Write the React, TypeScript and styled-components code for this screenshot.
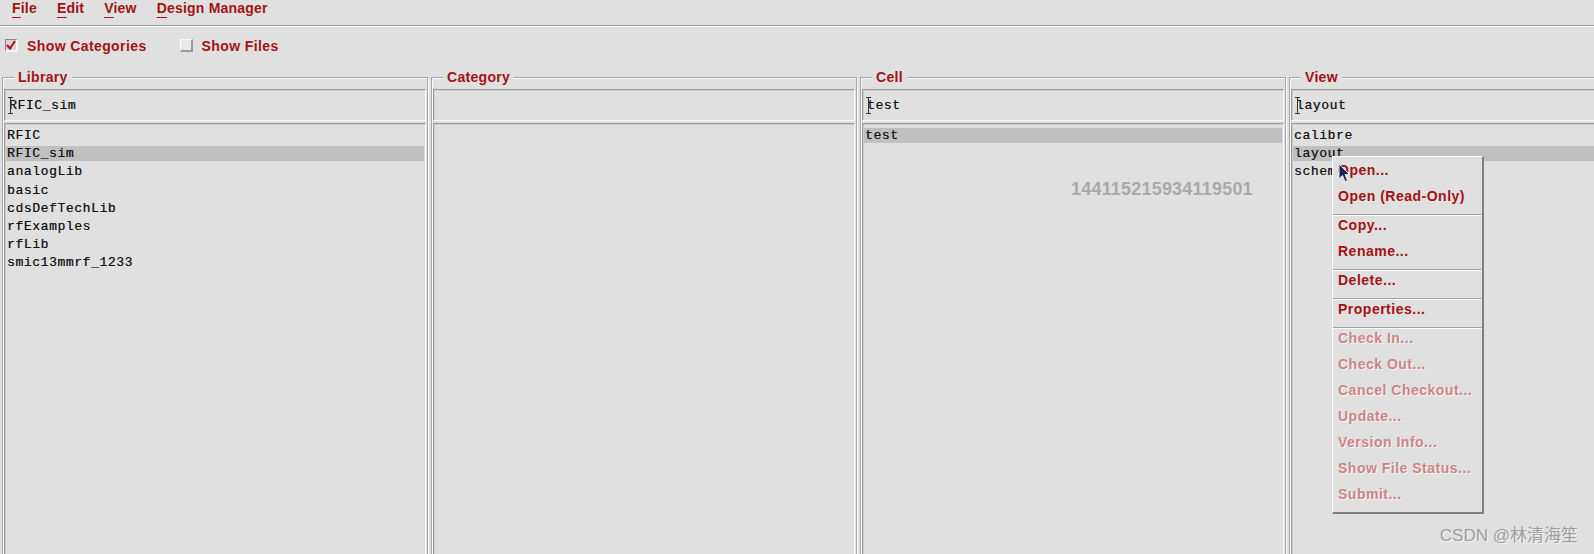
import React from "react";
import styled, { createGlobalStyle } from "styled-components";

const RED = "#a31313";
const SANS = `"Liberation Sans", Arial, sans-serif`;
const MONO = `"Liberation Mono", "Courier New", monospace`;

const GlobalStyle = createGlobalStyle`
  html, body { margin: 0; padding: 0; background: #e0e0e0; }
  body { width: 1594px; height: 554px; overflow: hidden; font-family: ${SANS}; }
`;

const Window = styled.div`
  position: relative;
  width: 1594px;
  height: 554px;
  overflow: hidden;
  background: #e0e0e0;
  display: flex;
  flex-direction: column;
`;

const MenuBar = styled.div`
  flex-shrink: 0;
  height: 25px;
  display: flex;
  align-items: flex-start;
  gap: 20px;
  padding-left: 12px;
  border-bottom: 1px solid #9c9c9c;
  box-shadow: 0 1px 0 #fff;
`;

const MenuItem = styled.span`
  font: bold 14px ${SANS};
  line-height: 16px;
  letter-spacing: 0.2px;
  color: ${RED};
  u {
    text-decoration: underline;
    text-underline-offset: 4px;
  }
`;

const OptionsRow = styled.div`
  flex-shrink: 0;
  height: 37px;
  margin-top: 1px;
  display: flex;
  align-items: center;
  padding-left: 5px;
  gap: 33px;
`;

const Option = styled.label`
  display: flex;
  align-items: center;
  gap: 9px;
  font: bold 14px ${SANS};
  letter-spacing: 0.4px;
  color: ${RED};
`;

const CheckBox = styled.span<{ $checked?: boolean }>`
  width: 13px;
  height: 13px;
  box-sizing: border-box;
  display: flex;
  align-items: center;
  justify-content: center;
  background: ${(p) => (p.$checked ? "#d6d6d6" : "#e9e9e9")};
  border-style: solid;
  border-width: 1px 2px 2px 1px;
  border-color: ${(p) =>
    p.$checked ? "#8a8a8a #f4f4f4 #f4f4f4 #8a8a8a" : "#fafafa #9a9a9a #9a9a9a #fafafa"};
`;

const Columns = styled.div`
  flex: 1;
  min-height: 0;
  display: grid;
  grid-template-columns: repeat(4, 426px);
  column-gap: 3px;
  padding-left: 2px;
  margin-top: 5px;
`;

const Panel = styled.fieldset`
  margin: 0;
  min-width: 0;
  height: 560px;
  padding: 4px 1px 0 1px;
  border: 1px solid #a8a8a8;
  box-shadow: inset 1px 1px 0 #fbfbfb, 1px 1px 0 #fbfbfb;
`;

const Legend = styled.legend`
  margin-left: 10px;
  padding: 0 4px;
  background: #e0e0e0;
  font: bold 14px ${SANS};
  line-height: 16px;
  letter-spacing: 0.3px;
  color: ${RED};
`;

const PanelBody = styled.div`
  display: flex;
  flex-direction: column;
  gap: 2px;
  height: 100%;
`;

const Field = styled.div`
  position: relative;
  height: 32px;
  box-sizing: border-box;
  display: flex;
  align-items: center;
  padding: 1px 0 0 4px;
  border: 1px solid;
  border-color: #9a9a9a #fbfbfb #fbfbfb #9a9a9a;
  box-shadow: inset 1px 1px 0 #cdcdcd;
  font: 13px ${MONO};
  letter-spacing: 0.6px;
  color: #111;
  text-shadow: 0.4px 0 0 rgba(0, 0, 0, 0.55);
`;

const IBeam = styled.svg`
  position: absolute;
  left: 3px;
  top: 7px;
`;

const ListBox = styled.div`
  flex: 1;
  box-sizing: border-box;
  padding-top: 4px;
  border: 1px solid;
  border-color: #9a9a9a #fbfbfb #fbfbfb #9a9a9a;
  box-shadow: inset 1px 1px 0 #cdcdcd;
`;

const Row = styled.div<{ $selected?: boolean }>`
  height: 15px;
  line-height: 15px;
  margin: 0 1px 3.2px 1px;
  padding-left: 1px;
  background: ${(p) => (p.$selected ? "#c0c0c0" : "transparent")};
  font: 13px ${MONO};
  letter-spacing: 0.6px;
  color: #111;
  text-shadow: 0.4px 0 0 rgba(0, 0, 0, 0.55);
  white-space: nowrap;
`;

const Popup = styled.div`
  position: absolute;
  left: 1332px;
  top: 156px;
  width: 152px;
  box-sizing: border-box;
  padding-top: 5px;
  background: #e0e0e0;
  border-style: solid;
  border-width: 1px 2px 2px 1px;
  border-color: #fbfbfb #7e7e7e #7e7e7e #fbfbfb;
`;

const PopItem = styled.div<{ $disabled?: boolean }>`
  height: 26px;
  line-height: 26px;
  padding-left: 5px;
  font: bold 14px ${SANS};
  letter-spacing: 0.5px;
  white-space: nowrap;
  color: ${(p) => (p.$disabled ? "#cd8585" : RED)};
  text-shadow: ${(p) => (p.$disabled ? "1px 1px 0 #f6f6f6" : "none")};
`;

const PopSep = styled.div`
  height: 0;
  margin-bottom: 1px;
  border-top: 1px solid #a2a2a2;
  border-bottom: 1px solid #fbfbfb;
`;

const Pointer = styled.svg`
  position: absolute;
  left: 1338px;
  top: 163px;
`;

const NumberMark = styled.div`
  position: absolute;
  left: 1071px;
  top: 179px;
  font: bold 18px ${SANS};
  letter-spacing: 0.2px;
  color: #a9a9a9;
`;

const CsdnMark = styled.div`
  position: absolute;
  right: 16px;
  top: 521px;
  font: 17px ${SANS}, "Noto Sans CJK SC", sans-serif;
  color: #9d9d9d;
  text-shadow: 1px 1px 0 #f2f2f2;
`;

const Cursor = () => (
  <IBeam width="5" height="17" viewBox="0 0 5 17">
    <path d="M0 0.5 H5 M2.5 0.5 V16.5 M0 16.5 H5" stroke="#333" strokeWidth="1" fill="none" />
  </IBeam>
);

type Col = { title: string; value: string; items: string[]; selected?: number };

const columns: Col[] = [
  {
    title: "Library",
    value: "RFIC_sim",
    items: ["RFIC", "RFIC_sim", "analogLib", "basic", "cdsDefTechLib", "rfExamples", "rfLib", "smic13mmrf_1233"],
    selected: 1,
  },
  { title: "Category", value: "", items: [] },
  { title: "Cell", value: "test", items: ["test"], selected: 0 },
  { title: "View", value: "layout", items: ["calibre", "layout", "schematic"], selected: 1 },
];

const menu: (string | null)[] = [
  "Open...",
  "Open (Read-Only)",
  null,
  "Copy...",
  "Rename...",
  null,
  "Delete...",
  null,
  "Properties...",
  null,
];
const disabledItems = [
  "Check In...",
  "Check Out...",
  "Cancel Checkout...",
  "Update...",
  "Version Info...",
  "Show File Status...",
  "Submit...",
];

export default function App() {
  return (
    <Window>
      <GlobalStyle />
      <MenuBar>
        {["File", "Edit", "View", "Design Manager"].map((m) => (
          <MenuItem key={m}>
            <u>{m[0]}</u>
            {m.slice(1)}
          </MenuItem>
        ))}
      </MenuBar>
      <OptionsRow>
        <Option>
          <CheckBox $checked>
            <svg width="10" height="10" viewBox="0 0 10 10">
              <path d="M1 5 L4 8.5 L9 1" stroke="#b01010" strokeWidth="2" fill="none" />
            </svg>
          </CheckBox>
          Show Categories
        </Option>
        <Option>
          <CheckBox />
          Show Files
        </Option>
      </OptionsRow>
      <Columns>
        {columns.map((c) => (
          <Panel key={c.title}>
            <Legend>{c.title}</Legend>
            <PanelBody>
              <Field>
                {c.value && <Cursor />}
                {c.value}
              </Field>
              <ListBox>
                {c.items.map((it, i) => (
                  <Row key={it} $selected={i === c.selected}>
                    {it}
                  </Row>
                ))}
              </ListBox>
            </PanelBody>
          </Panel>
        ))}
      </Columns>

      <NumberMark>144115215934119501</NumberMark>

      <Popup>
        {menu.map((m, i) => (m === null ? <PopSep key={i} /> : <PopItem key={i}>{m}</PopItem>))}
        {disabledItems.map((m) => (
          <PopItem key={m} $disabled>
            {m}
          </PopItem>
        ))}
      </Popup>

      <Pointer width="13" height="20" viewBox="0 0 13 20">
        <path
          d="M1 1 L1 16 L4.5 12.5 L7 18.5 L9.5 17.5 L7 11.5 L11.5 11.5 Z"
          fill="#1c2458"
          stroke="#e8e8f0"
          strokeWidth="1"
        />
      </Pointer>

      <CsdnMark>CSDN @林清海笙</CsdnMark>
    </Window>
  );
}
